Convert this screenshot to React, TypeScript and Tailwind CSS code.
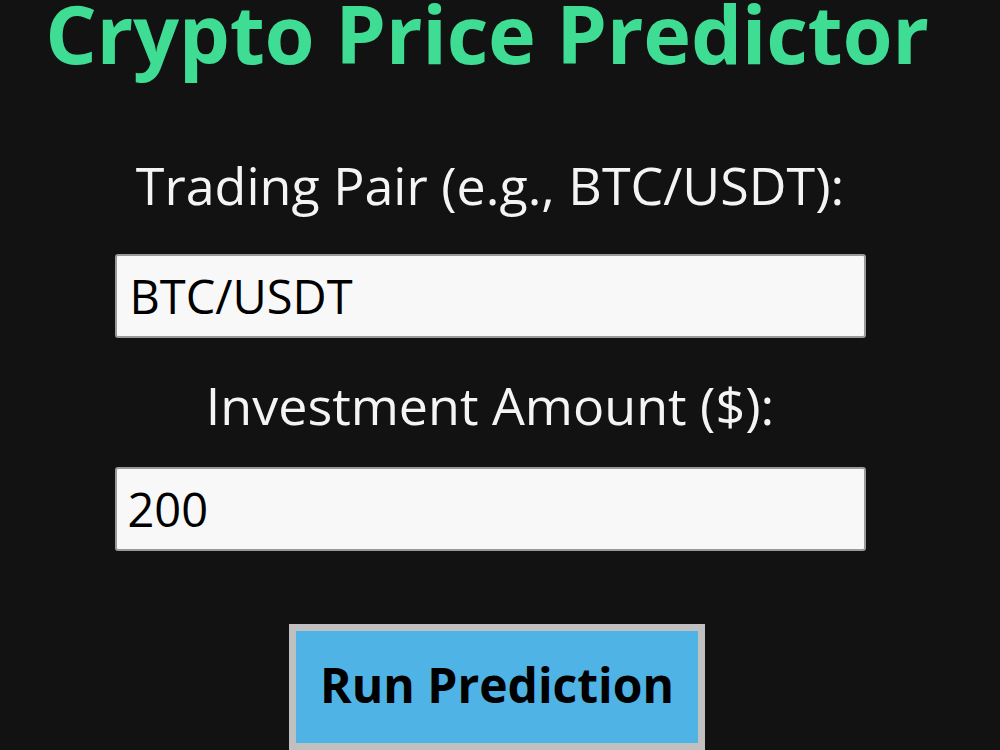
import React, { useState } from "react";

const App: React.FC = () => {
  const [pair, setPair] = useState("BTC/USDT");
  const [amount, setAmount] = useState("200");

  return (
    <div className="w-[1000px] h-[750px] overflow-hidden bg-[#121212] flex flex-col items-center pr-[20px] font-['Open_Sans',sans-serif]">
      <h1 className="text-[#3fdc94] font-bold text-[81px] leading-[65px] mt-[0px] mr-[6px] tracking-[-0.3px] whitespace-nowrap">
        Crypto Price Predictor
      </h1>

      <label className="text-[#f4f4f4] text-[52px] leading-none mt-[94px]">
        Trading Pair (e.g., BTC/USDT):
      </label>
      <input
        value={pair}
        onChange={(e) => setPair(e.target.value)}
        className="mt-[43px] w-[751px] h-[84px] shrink-0 bg-[#f8f8f8] border-2 border-[#9a9a9a] rounded-[3px] px-[13px] text-[47px] text-black outline-none"
      />

      <label className="text-[#f4f4f4] text-[52px] leading-none mt-[41px]">
        Investment Amount ($):
      </label>
      <input
        value={amount}
        onChange={(e) => setAmount(e.target.value)}
        className="mt-[36px] w-[751px] h-[84px] shrink-0 bg-[#f8f8f8] border-2 border-[#9a9a9a] rounded-[3px] px-[11px] text-[47px] text-black outline-none"
      />

      <button className="mt-[73px] ml-[14px] w-[416px] h-[126px] bg-[#4fb3e6] border-[7px] border-[#c0c0c0] text-black font-bold text-[48px] shrink-0 pb-[4px]">
        Run Prediction
      </button>
    </div>
  );
};

export default App;
